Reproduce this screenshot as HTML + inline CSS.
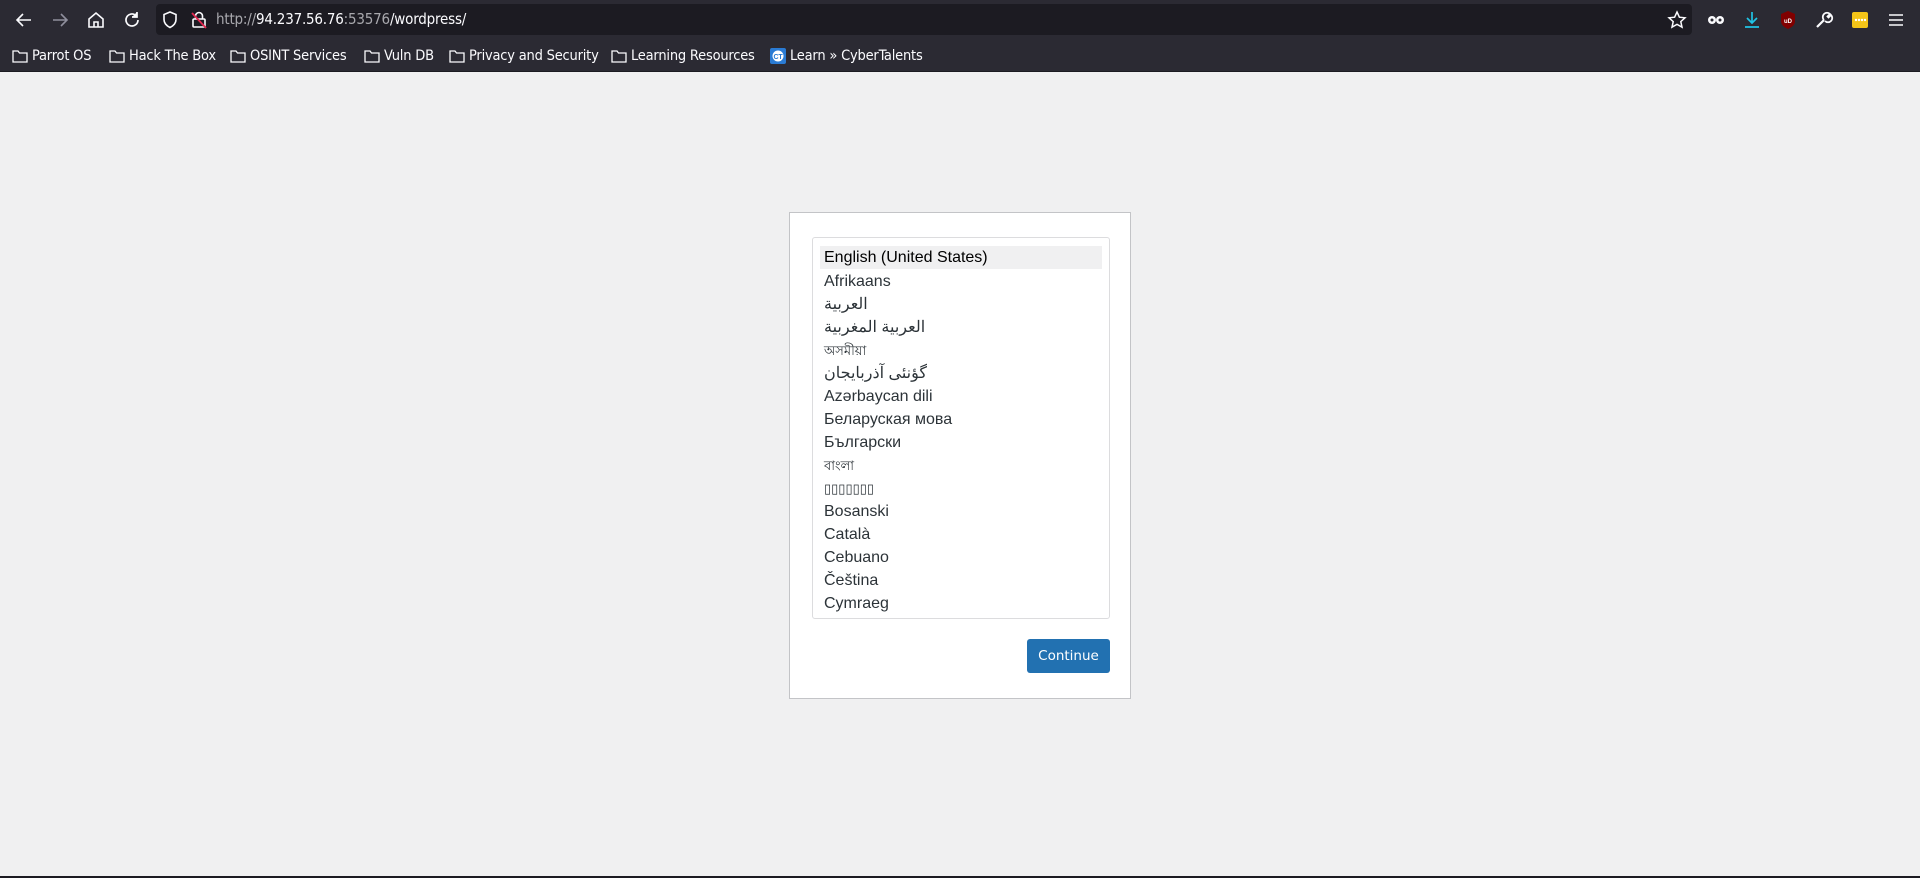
<!DOCTYPE html>
<html><head><meta charset="utf-8"><style>
*{margin:0;padding:0;box-sizing:border-box}
body{width:1920px;height:878px;background:#f0f0f1;font-family:"Liberation Sans",sans-serif;position:relative;overflow:hidden}
#tb{position:absolute;left:0;top:0;width:1920px;height:40px;background:#2b2a33}
#bm{position:absolute;left:0;top:40px;width:1920px;height:32px;background:#2b2a33;border-bottom:1px solid #1c1b22}
#url{position:absolute;left:156px;top:4px;width:1536px;height:31px;background:#1c1b22;border-radius:4px}
.ic{position:absolute;top:10px}
#urltxt{position:absolute;left:216px;top:10px;font-size:15px;color:#a8a8ad;font-family:"DejaVu Sans Condensed","Liberation Sans",sans-serif;letter-spacing:-0.2px}
#urltxt b{font-weight:normal;color:#fbfbfe}
.bk{position:absolute;top:48px;font-size:14.5px;color:#fbfbfe;font-family:"DejaVu Sans Condensed","Liberation Sans",sans-serif;display:flex;align-items:center;gap:4px;white-space:nowrap;letter-spacing:-0.2px}
#card{position:absolute;left:789px;top:212px;width:342px;height:487px;background:#fff;border:1px solid #c3c4c7}
#sel{position:absolute;left:812px;top:237px;width:298px;height:382px;border:1px solid #dcdcde;border-radius:3px;background:#fff}
.op{position:absolute;left:820px;width:282px;height:23px;font-size:16px;color:#2c3338;line-height:23px;padding-left:4px;font-family:"Liberation Sans","Noto Sans CJK SC",sans-serif}
#btn{position:absolute;left:1027px;top:639px;width:83px;height:34px;background:#2271b1;border-radius:3px;color:#fff;font-size:13.5px;text-align:center;line-height:34px;font-family:"DejaVu Sans","Liberation Sans",sans-serif}
#bot{position:absolute;left:0;top:876px;width:1920px;height:2px;background:#1c1b22}
</style></head><body>
<div id="tb"></div>
<div id="url"></div>
<svg class="ic" style="left:14px" width="20" height="20" viewBox="0 0 20 20" fill="none" stroke="#fbfbfe" stroke-width="1.6"><path d="M17 10H3M9 4L3 10l6 6"/></svg>
<svg class="ic" style="left:50px" width="20" height="20" viewBox="0 0 20 20" fill="none" stroke="#8f8f9d" stroke-width="1.6"><path d="M3 10h14M11 4l6 6-6 6"/></svg>
<svg class="ic" style="left:86px" width="20" height="20" viewBox="0 0 20 20" fill="none" stroke="#fbfbfe" stroke-width="1.6"><path d="M3 9l7-6 7 6v8H3z M8 17v-5h4v5"/></svg>
<svg class="ic" style="left:122px" width="20" height="20" viewBox="0 0 20 20" fill="none" stroke="#fbfbfe" stroke-width="1.7"><path d="M16 10a6 6 0 1 1-2-4.5"/><path d="M15 2v5h-5" fill="#fbfbfe"/></svg>
<svg class="ic" style="left:160px" width="20" height="20" viewBox="0 0 20 20" fill="none" stroke="#fbfbfe" stroke-width="1.6"><path d="M10 2l6 2.5v5c0 4-3 6.5-6 8-3-1.5-6-4-6-8v-5z"/></svg>
<svg class="ic" style="left:189px" width="20" height="20" viewBox="0 0 20 20" fill="none" stroke="#fbfbfe" stroke-width="1.6"><rect x="4" y="9" width="12" height="8" rx="1"/><path d="M6.5 9V6a3.5 3.5 0 0 1 7 0v3"/><path d="M3 3l14 15" stroke="#e22850" stroke-width="1.8"/></svg>
<div id="urltxt">http://<b>94.237.56.76</b>:53576<b>/wordpress/</b></div>
<svg class="ic" style="left:1667px" width="20" height="20" viewBox="0 0 20 20" fill="none" stroke="#fbfbfe" stroke-width="1.5"><path d="M10 2l2.4 5.2 5.6.6-4.2 3.8 1.2 5.6L10 14.4 5 17.2l1.2-5.6L2 7.8l5.6-.6z"/></svg>
<svg class="ic" style="left:1706px" width="20" height="20" viewBox="0 0 20 20" fill="#fbfbfe"><circle cx="6" cy="10" r="4"/><circle cx="14" cy="10" r="4"/><circle cx="6" cy="10" r="1.5" fill="#2b2a33"/><circle cx="14" cy="10" r="1.5" fill="#2b2a33"/></svg>
<svg class="ic" style="left:1742px" width="20" height="20" viewBox="0 0 20 20" fill="none" stroke="#20c3e5" stroke-width="1.7"><path d="M10 2v11M5 8l5 5 5-5M3 17h14"/></svg>
<svg class="ic" style="left:1778px" width="20" height="20" viewBox="0 0 20 20"><path d="M10 1l7 3v7c0 4-3 6-7 8-4-2-7-4-7-8V4z" fill="#800000"/><text x="10" y="13" font-size="6" fill="#fff" text-anchor="middle" font-family="Liberation Sans" font-weight="bold">uD</text></svg>
<svg class="ic" style="left:1814px" width="20" height="20" viewBox="0 0 20 20" fill="none" stroke="#fbfbfe" stroke-width="2.2"><path d="M3 17l7-7"/><path d="M10 10a4 4 0 0 1 6-6l-2.5 2.5 1 1L17 5a4 4 0 0 1-6 6" stroke-width="1.8"/></svg>
<svg class="ic" style="left:1850px" width="20" height="20" viewBox="0 0 20 20"><rect x="2" y="2" width="16" height="16" rx="2" fill="#f5c518"/><circle cx="6" cy="10" r="1.2" fill="#fff"/><circle cx="9" cy="10" r="1.2" fill="#fff"/><circle cx="12" cy="10" r="1.2" fill="#fff"/><circle cx="15" cy="10" r="1.2" fill="#fff"/></svg>
<svg class="ic" style="left:1886px" width="20" height="20" viewBox="0 0 20 20" fill="none" stroke="#fbfbfe" stroke-width="1.6"><path d="M3 5h14M3 10h14M3 15h14"/></svg>
<div id="bm"></div>
<div class="bk" style="left:12px"><svg width="16" height="14" viewBox="0 0 16 14" fill="none" stroke="#fbfbfe" stroke-width="1.3"><path d="M1 2h5l1.5 2H15v9H1z"/></svg>Parrot OS</div>
<div class="bk" style="left:109px"><svg width="16" height="14" viewBox="0 0 16 14" fill="none" stroke="#fbfbfe" stroke-width="1.3"><path d="M1 2h5l1.5 2H15v9H1z"/></svg>Hack The Box</div>
<div class="bk" style="left:230px"><svg width="16" height="14" viewBox="0 0 16 14" fill="none" stroke="#fbfbfe" stroke-width="1.3"><path d="M1 2h5l1.5 2H15v9H1z"/></svg>OSINT Services</div>
<div class="bk" style="left:364px"><svg width="16" height="14" viewBox="0 0 16 14" fill="none" stroke="#fbfbfe" stroke-width="1.3"><path d="M1 2h5l1.5 2H15v9H1z"/></svg>Vuln DB</div>
<div class="bk" style="left:449px"><svg width="16" height="14" viewBox="0 0 16 14" fill="none" stroke="#fbfbfe" stroke-width="1.3"><path d="M1 2h5l1.5 2H15v9H1z"/></svg>Privacy and Security</div>
<div class="bk" style="left:611px"><svg width="16" height="14" viewBox="0 0 16 14" fill="none" stroke="#fbfbfe" stroke-width="1.3"><path d="M1 2h5l1.5 2H15v9H1z"/></svg>Learning Resources</div>
<div class="bk" style="left:770px"><svg width="16" height="16" viewBox="0 0 16 16"><rect width="16" height="16" rx="2" fill="#2a7bd4"/><circle cx="8" cy="8" r="5.5" fill="#fff"/><text x="8" y="11" font-size="7" text-anchor="middle" fill="#2a7bd4" font-family="Liberation Sans" font-weight="bold">CT</text></svg>Learn » CyberTalents</div>
<div id="card"></div>
<div id="sel"></div>
<div class="op" style="top:246px;background:#f0f0f1;color:#000">English (United States)</div>
<div class="op" style="top:270px">Afrikaans</div>
<div class="op" style="top:293px">العربية</div>
<div class="op" style="top:316px">العربية المغربية</div>
<div class="op" style="top:339px;font-size:13px">অসমীয়া</div>
<div class="op" style="top:362px">گؤنئی آذربایجان</div>
<div class="op" style="top:385px">Azərbaycan dili</div>
<div class="op" style="top:408px">Беларуская мова</div>
<div class="op" style="top:431px">Български</div>
<div class="op" style="top:454px;font-size:13px">বাংলা</div>
<div class="op" style="top:477px;font-size:13px">▯▯▯▯▯▯▯</div>
<div class="op" style="top:500px">Bosanski</div>
<div class="op" style="top:523px">Català</div>
<div class="op" style="top:546px">Cebuano</div>
<div class="op" style="top:569px">Čeština</div>
<div class="op" style="top:592px">Cymraeg</div>
<div id="btn">Continue</div>
<div id="bot"></div>
</body></html>
